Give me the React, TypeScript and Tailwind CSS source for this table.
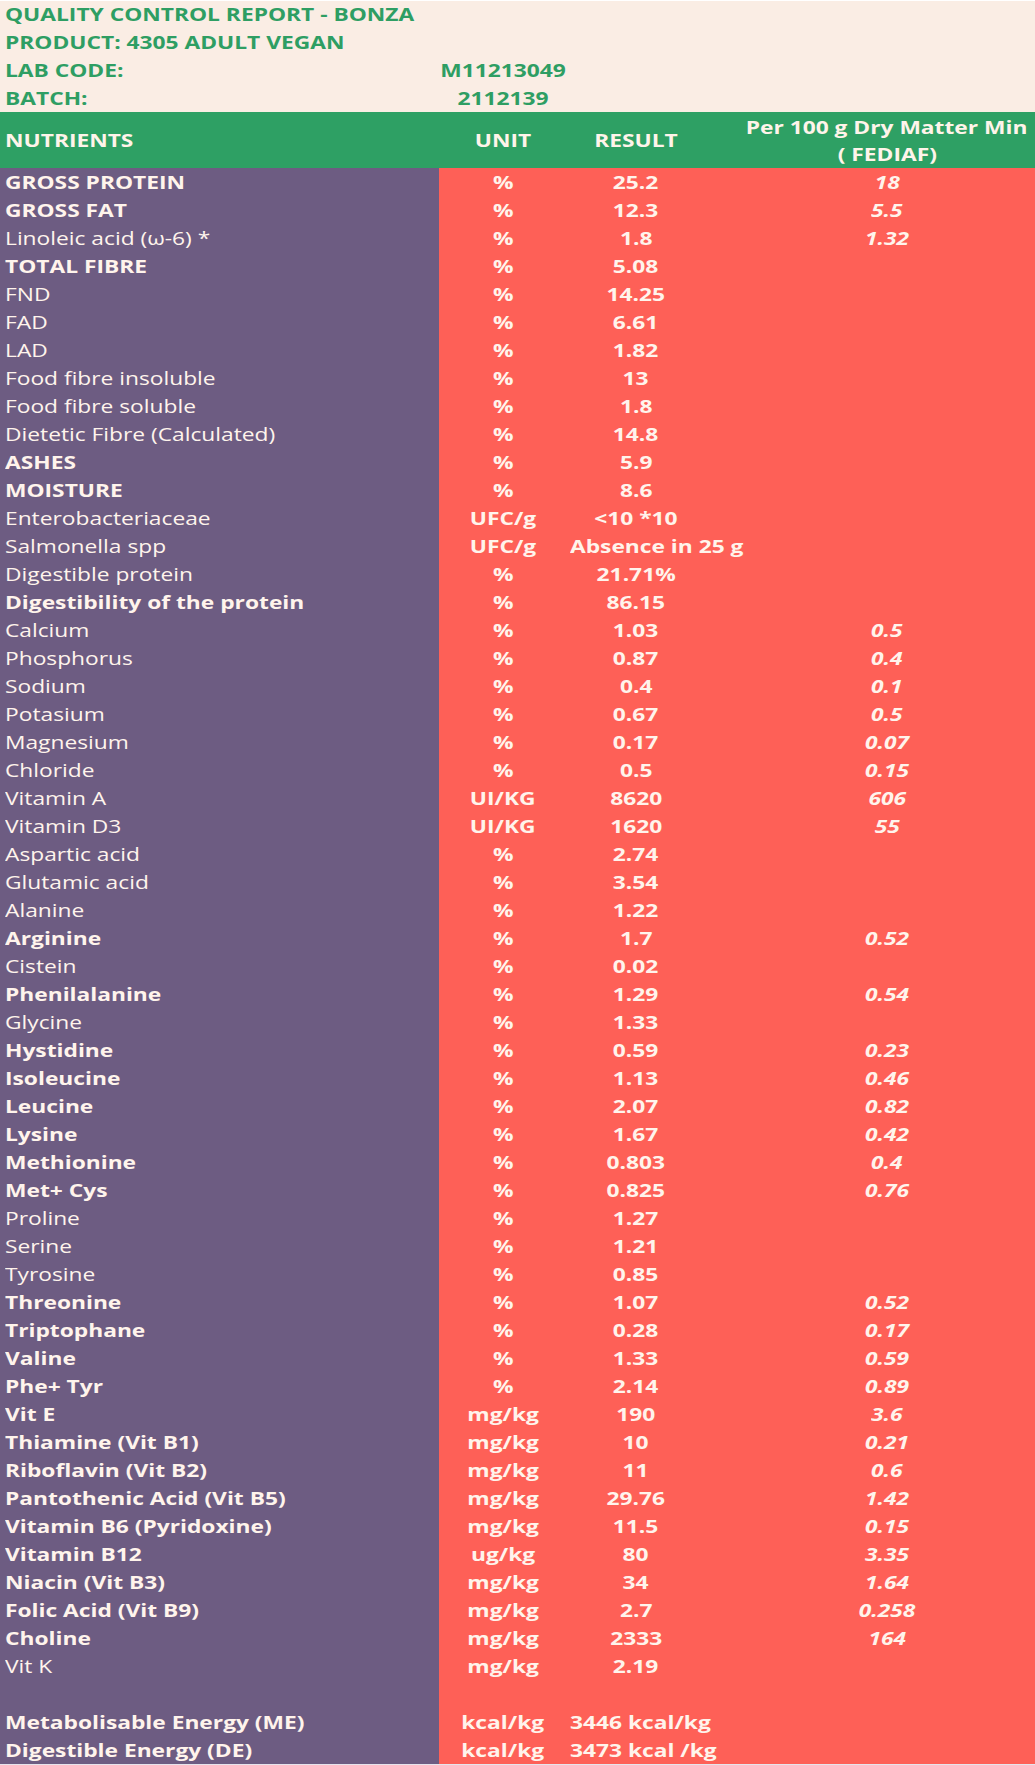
import React from "react";

type Row = [string, boolean, string, string, string, boolean?];

const rows: Row[] = [
  ["GROSS PROTEIN", true, "%", "25.2", "18"],
  ["GROSS FAT", true, "%", "12.3", "5.5"],
  ["Linoleic acid (ω-6) *", false, "%", "1.8", "1.32"],
  ["TOTAL FIBRE", true, "%", "5.08", ""],
  ["FND", false, "%", "14.25", ""],
  ["FAD", false, "%", "6.61", ""],
  ["LAD", false, "%", "1.82", ""],
  ["Food fibre insoluble", false, "%", "13", ""],
  ["Food fibre soluble", false, "%", "1.8", ""],
  ["Dietetic Fibre (Calculated)", false, "%", "14.8", ""],
  ["ASHES", true, "%", "5.9", ""],
  ["MOISTURE", true, "%", "8.6", ""],
  ["Enterobacteriaceae", false, "UFC/g", "<10 *10", ""],
  ["Salmonella spp", false, "UFC/g", "Absence in 25 g", "", true],
  ["Digestible protein", false, "%", "21.71%", ""],
  ["Digestibility of the protein", true, "%", "86.15", ""],
  ["Calcium", false, "%", "1.03", "0.5"],
  ["Phosphorus", false, "%", "0.87", "0.4"],
  ["Sodium", false, "%", "0.4", "0.1"],
  ["Potasium", false, "%", "0.67", "0.5"],
  ["Magnesium", false, "%", "0.17", "0.07"],
  ["Chloride", false, "%", "0.5", "0.15"],
  ["Vitamin A", false, "UI/KG", "8620", "606"],
  ["Vitamin D3", false, "UI/KG", "1620", "55"],
  ["Aspartic acid", false, "%", "2.74", ""],
  ["Glutamic acid", false, "%", "3.54", ""],
  ["Alanine", false, "%", "1.22", ""],
  ["Arginine", true, "%", "1.7", "0.52"],
  ["Cistein", false, "%", "0.02", ""],
  ["Phenilalanine", true, "%", "1.29", "0.54"],
  ["Glycine", false, "%", "1.33", ""],
  ["Hystidine", true, "%", "0.59", "0.23"],
  ["Isoleucine", true, "%", "1.13", "0.46"],
  ["Leucine", true, "%", "2.07", "0.82"],
  ["Lysine", true, "%", "1.67", "0.42"],
  ["Methionine", true, "%", "0.803", "0.4"],
  ["Met+ Cys", true, "%", "0.825", "0.76"],
  ["Proline", false, "%", "1.27", ""],
  ["Serine", false, "%", "1.21", ""],
  ["Tyrosine", false, "%", "0.85", ""],
  ["Threonine", true, "%", "1.07", "0.52"],
  ["Triptophane", true, "%", "0.28", "0.17"],
  ["Valine", true, "%", "1.33", "0.59"],
  ["Phe+ Tyr", true, "%", "2.14", "0.89"],
  ["Vit E", true, "mg/kg", "190", "3.6"],
  ["Thiamine (Vit B1)", true, "mg/kg", "10", "0.21"],
  ["Riboflavin (Vit B2)", true, "mg/kg", "11", "0.6"],
  ["Pantothenic Acid (Vit B5)", true, "mg/kg", "29.76", "1.42"],
  ["Vitamin B6 (Pyridoxine)", true, "mg/kg", "11.5", "0.15"],
  ["Vitamin B12", true, "ug/kg", "80", "3.35"],
  ["Niacin (Vit B3)", true, "mg/kg", "34", "1.64"],
  ["Folic Acid (Vit B9)", true, "mg/kg", "2.7", "0.258"],
  ["Choline", true, "mg/kg", "2333", "164"],
  ["Vit K", false, "mg/kg", "2.19", ""],
  ["", false, "", "", ""],
  ["Metabolisable Energy (ME)", true, "kcal/kg", "3446 kcal/kg", "", true],
  ["Digestible Energy (DE)", true, "kcal/kg", "3473 kcal /kg", "", true],
];

function S({ children, left }: { children: React.ReactNode; left?: boolean }) {
  return (
    <span
      className={
        left
          ? "inline-block whitespace-nowrap origin-left scale-x-[1.23]"
          : "inline-block whitespace-nowrap origin-center scale-x-[1.23]"
      }
    >
      {children}
    </span>
  );
}

const grid = "grid grid-cols-[439px_128px_138px_1fr] h-[28px] leading-[28px]";

export default function App() {
  return (
    <div className="w-[1035px] font-['Open_Sans',sans-serif] text-[18.5px] font-bold">
      {/* Title band */}
      <div className="bg-[#faede4] text-[#2e9e63] shadow-[inset_0_1px_0_#ffffff]">
        <div className="h-[28px] leading-[27px] pl-[5px]">
          <S left>QUALITY CONTROL REPORT - BONZA</S>
        </div>
        <div className="h-[28px] leading-[27px] pl-[5px]">
          <S left>PRODUCT: 4305 ADULT VEGAN</S>
        </div>
        <div className={grid}>
          <div className="pl-[5px]">
            <S left>LAB CODE:</S>
          </div>
          <div className="text-center">
            <S>M11213049</S>
          </div>
        </div>
        <div className={grid}>
          <div className="pl-[5px]">
            <S left>BATCH:</S>
          </div>
          <div className="text-center">
            <S>2112139</S>
          </div>
        </div>
      </div>

      {/* Column header */}
      <div className="grid grid-cols-[439px_128px_138px_1fr] h-[56px] items-center bg-[#2ea064] text-[#fff4ea]">
        <div className="pl-[5px]">
          <S left>NUTRIENTS</S>
        </div>
        <div className="text-center">
          <S>UNIT</S>
        </div>
        <div className="text-center">
          <S>RESULT</S>
        </div>
        <div className="flex flex-col items-center pl-[34px] leading-[27px]">
          <S>Per 100 g Dry Matter Min</S>
          <S>( FEDIAF)</S>
        </div>
      </div>

      {/* Body */}
      <div className="text-[#fff4ec]">
        {rows.map(([name, bold, unit, result, min, leftResult], i) => (
          <div key={i} className={grid}>
            <div
              className={
                bold
                  ? "bg-[#6d5c82] pl-[5px] font-bold"
                  : "bg-[#6d5c82] pl-[5px] font-normal"
              }
            >
              <S left>{name}</S>
            </div>
            <div className="bg-[#fe6057] text-center">
              <S>{unit}</S>
            </div>
            {leftResult ? (
              <div className="bg-[#fe6057] pl-[3px] whitespace-nowrap">
                <S left>{result}</S>
              </div>
            ) : (
              <div className="bg-[#fe6057] text-center">
                <S>{result}</S>
              </div>
            )}
            <div className="bg-[#fe6057] text-center pl-[34px] italic">
              <S>{min}</S>
            </div>
          </div>
        ))}
      </div>
      <div className="h-[1px] bg-[#e6e4ec]" />
    </div>
  );
}
